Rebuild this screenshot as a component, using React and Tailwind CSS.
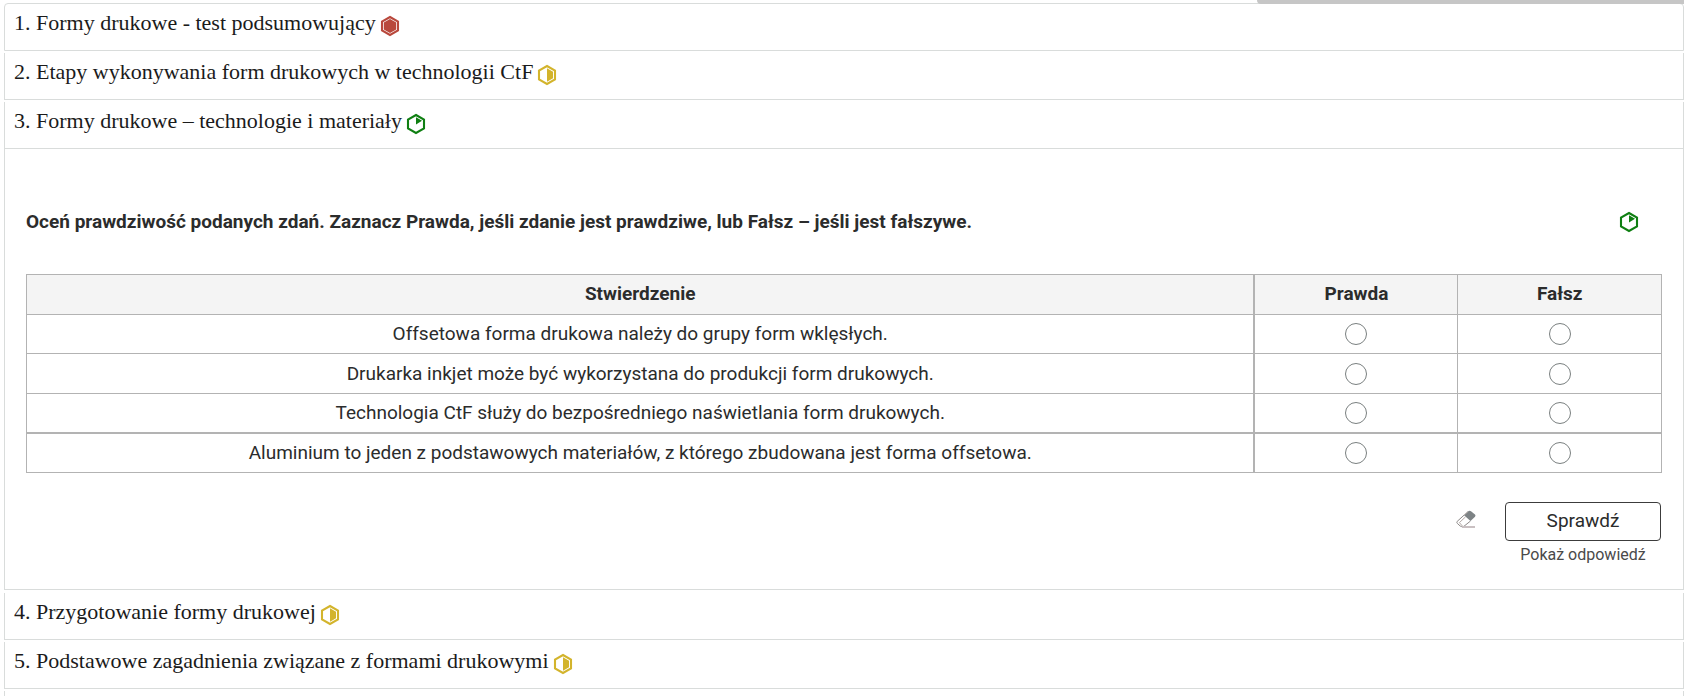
import { useState } from 'react';

const LEVELS = {
  easy: { color: '#0f7f12', label: 'łatwe' },
  medium: { color: '#d3b42c', label: 'średnie' },
  hard: { color: '#b9483c', label: 'trudne' },
};

const EXERCISES = [
  { id: 1, title: 'Formy drukowe - test podsumowujący', level: 'hard' },
  { id: 2, title: 'Etapy wykonywania form drukowych w technologii CtF', level: 'medium' },
  { id: 3, title: 'Formy drukowe – technologie i materiały', level: 'easy' },
  { id: 4, title: 'Przygotowanie formy drukowej', level: 'medium' },
  { id: 5, title: 'Podstawowe zagadnienia związane z formami drukowymi', level: 'medium' },
];

const STATEMENTS = [
  'Offsetowa forma drukowa należy do grupy form wklęsłych.',
  'Drukarka inkjet może być wykorzystana do produkcji form drukowych.',
  'Technologia CtF służy do bezpośredniego naświetlania form drukowych.',
  'Aluminium to jeden z podstawowych materiałów, z którego zbudowana jest forma offsetowa.',
];

function LevelIcon({ level }) {
  const { color, label } = LEVELS[level];
  return (
    <svg role="img" aria-label={label} width="20" height="22" viewBox="0 0 20 22" className="shrink-0">
      <path d="M10 2 L18 6.5 V15.5 L10 20 L2 15.5 V6.5 Z" fill="none" stroke={color} strokeWidth="2.1" />
      {level === 'hard' && <path d="M10 4.1 L16.2 7.6 V14.4 L10 17.9 L3.8 14.4 V7.6 Z" fill={color} />}
      {level === 'medium' && <path d="M10 4.2 L16 7.7 V14.3 L10 17.8 Z" fill={color} />}
      {level === 'easy' && <path d="M10 4.2 L16 7.8 L10 11.4 Z" fill={color} />}
    </svg>
  );
}

function EraserIcon() {
  return (
    <svg width="20" height="18" viewBox="0 0 20 18" fill="none">
      <path d="M12 1.5 Q13.5 0.3 15 1.3 L19 4.6 Q20 5.6 19 6.8 L14.5 11 L8 5.2 Z" fill="#7d8385" />
      <path d="M8 5.2 L1.2 11.4 Q0.4 12.4 1.3 13.4 L4.2 16 Q5.3 17 7.8 16.4 L14.5 11" stroke="#8d8988" />
      <path d="M9.6 6.8 L3.4 12.6 L6.6 16.2 M8 5.2 L12 1.5" stroke="#b3a9a6" />
      <path d="M6 17 H19" stroke="#c9c0c2" strokeWidth="2" />
    </svg>
  );
}

function TrueFalseExercise() {
  const [answers, setAnswers] = useState({});

  return (
    <section className="border-x border-b border-[#d9dcdb] px-[21px] pt-[59px] pb-[22px] mb-px font-['Roboto',sans-serif] text-[#2b2c2c]">
      <div className="flex items-center justify-between mb-[38px] pr-[23px]">
        <p className="text-[19px] leading-7 font-bold">
          Oceń prawdziwość podanych zdań. Zaznacz Prawda, jeśli zdanie jest prawdziwe, lub Fałsz – jeśli jest fałszywe.
        </p>
        <LevelIcon level="easy" />
      </div>

      <table className="w-full table-fixed border-collapse border border-[#b3b3b3] text-[19px] leading-7 text-center">
        <thead>
          <tr className="h-10 bg-[#f4f4f4]">
            <th className="border border-[#b3b3b3] border-r-2 pb-0.5 font-bold">Stwierdzenie</th>
            <th className="w-[12.45%] border border-[#b3b3b3] pb-0.5 font-bold">Prawda</th>
            <th className="w-[12.45%] border border-[#b3b3b3] pb-0.5 font-bold">Fałsz</th>
          </tr>
        </thead>
        <tbody>
          {STATEMENTS.map((text, i) => (
            <tr key={text} className="h-[39px] even:h-10 last:border-t-2 border-[#b3b3b3]">
              <td id={`statement-${i}`} className="border-x border-b border-[#b3b3b3] border-r-2">{text}</td>
              {['Prawda', 'Fałsz'].map(value => (
                <td key={value} className="border-x border-b border-[#b3b3b3]">
                  <input type="radio" name={`answer-${i}`} aria-label={value} aria-describedby={`statement-${i}`}
                    checked={answers[i] === value} onChange={() => setAnswers({ ...answers, [i]: value })}
                    className="block mx-auto size-[22px] appearance-none rounded-full border border-[#7a8080] bg-white checked:bg-[#7a8080]" />
                </td>
              ))}
            </tr>
          ))}
        </tbody>
      </table>

      {/* Actions */}
      <div className="mt-[29px] flex items-start justify-end gap-[29px] pr-px">
        <button aria-label="Wyczyść" onClick={() => setAnswers({})} className="mt-2">
          <EraserIcon />
        </button>
        <div className="flex w-[156px] flex-col items-center gap-0.5">
          <button className="h-[39px] w-full rounded-sm border border-[#3c3c3c] text-[19px]">Sprawdź</button>
          <button className="text-base leading-6 text-[#4a4a4a]">Pokaż odpowiedź</button>
        </div>
      </div>
    </section>
  );
}

export default function App() {
  const [open, setOpen] = useState(3);

  return (
    <div className="flex min-h-screen flex-col bg-white">
      <div className="relative -mb-px ml-auto h-1 w-[427px] shrink-0 rounded-bl-sm bg-[#c6c6c6]" />
      <main className="flex grow flex-col gap-0.5 pl-1">
        {EXERCISES.map(ex => (
          <div key={ex.id}>
            <h2 className={`border-x border-b border-[#d9dcdb] ${ex.id === 1 ? 'rounded-t-sm border-t' : ''}`}>
              <button aria-expanded={open === ex.id} onClick={() => setOpen(open === ex.id ? null : ex.id)}
                className="flex w-full items-end gap-1 px-[9px] pt-[5px] pb-[13px] text-left font-['Liberation_Serif',serif] text-[22px] leading-7 text-[#1b1b1b]">
                <span>{ex.id}. {ex.title}</span>
                <LevelIcon level={ex.level} />
              </button>
            </h2>
            {open === ex.id && <TrueFalseExercise />}
          </div>
        ))}
        <div className="grow border-x border-[#d9dcdb]" />
      </main>
    </div>
  );
}
